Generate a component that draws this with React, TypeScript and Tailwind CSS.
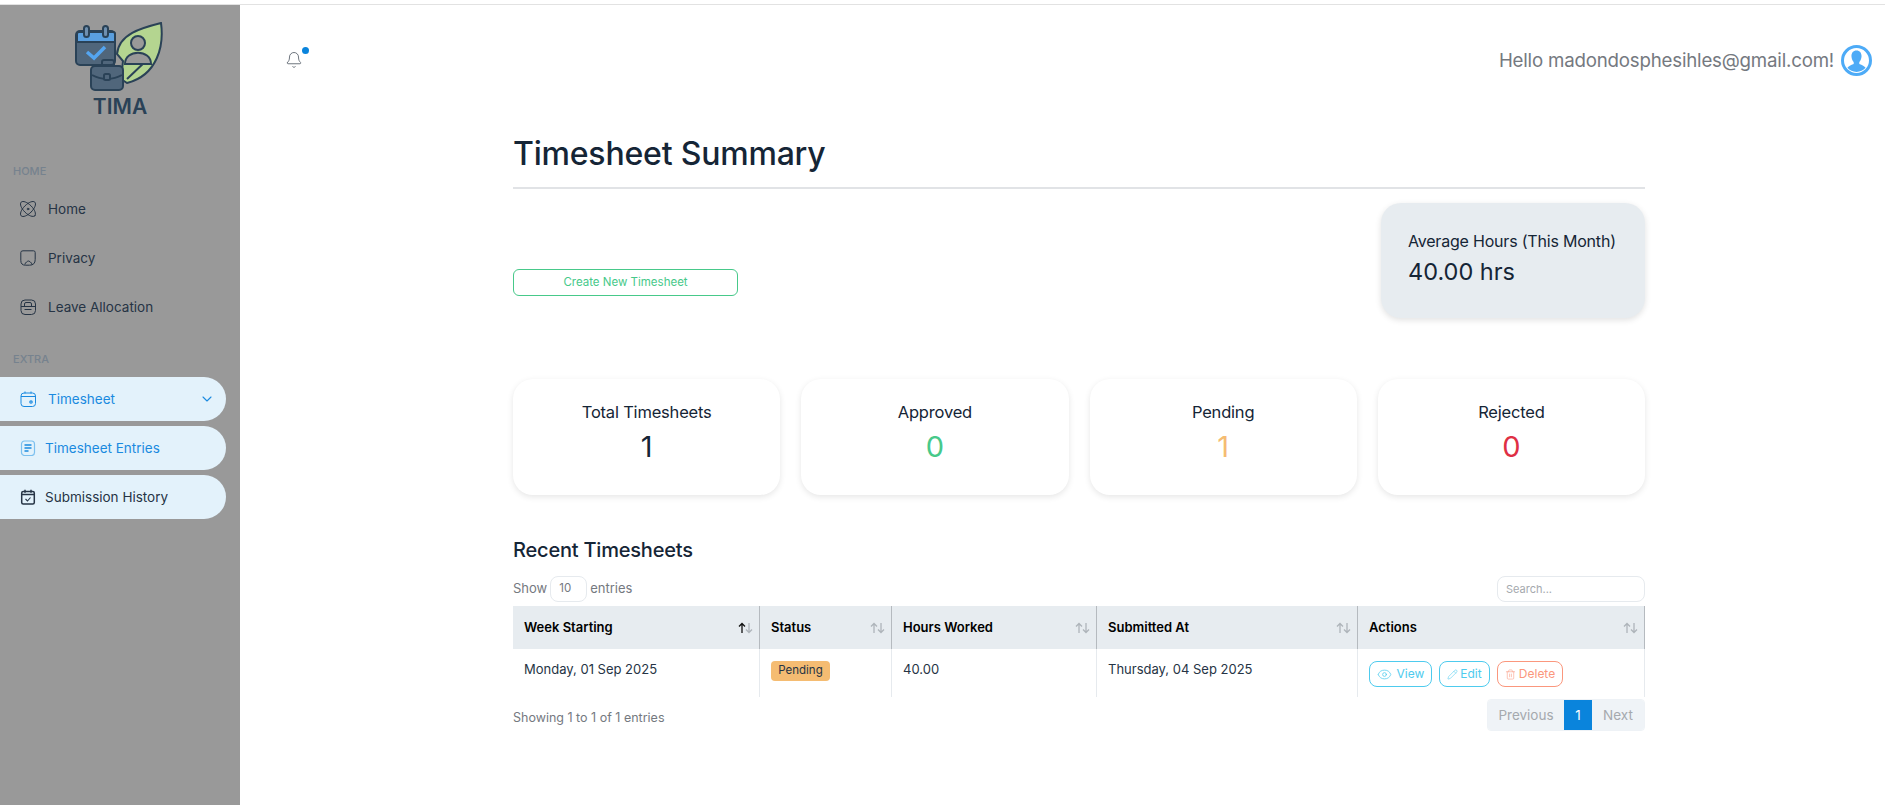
import { Atom, Bell, ChevronDown, Eye, Pencil, Trash2 } from "lucide-react";

const font = "[font-family:Inter,'Liberation_Sans',sans-serif]";

function Logo() {
  return (
    <svg width="90" height="72" viewBox="0 0 90 72" fill="none" stroke="#2a4257" strokeWidth="2" aria-hidden>
      <path d="M42 32C44 12 66 6 86 1c3 22-3 52-34 60l-6-4 2-18z" fill="#b4d590" />
      <path d="M52 57l20-19" />
      <circle cx="63" cy="21" r="7" fill="#999" />
      <path d="M50 42c0-15 26-15 26 0z" fill="#999" />
      <rect x="1" y="9" width="39" height="34" rx="4" fill="#50667b" />
      <path d="M2 20V12q0-2 2-2h34q2 0 2 2v8z" fill="#5a9fdf" />
      <rect x="9" y="4" width="5" height="11" rx="2.5" fill="#6f90b0" />
      <rect x="28" y="4" width="5" height="11" rx="2.5" fill="#6f90b0" />
      <path d="M12 30l7 6 11-11" stroke="#54a5f0" strokeWidth="3.5" />
      <path d="M27 44v-4q0-2 2-2h8q2 0 2 2v4" />
      <rect x="16" y="44" width="32" height="24" rx="4" fill="#50667b" />
      <path d="M17 53c9 5 21 5 30 0" />
      <rect x="29" y="52" width="6" height="6" rx="1.5" fill="#50667b" />
    </svg>
  );
}

function PrivacyIcon() {
  return (
    <svg width="16" height="16" viewBox="0 0 16 16" fill="none" stroke="#263445" strokeWidth="1" aria-hidden>
      <path d="M3 .8h10.5q1.7 0 1.7 1.7v7q0 5.7-5.7 5.7h-4q-4.7 0-4.7-4.7v-8q0-1.7 2.2-1.7z" />
      <path d="M5 14.5q0-1.500 1.500-2.500l1.200-.8q.7-.4 1.400 0l1.300.8q1.500 1 1.500 2.500" />
    </svg>
  );
}

function LeaveIcon() {
  return (
    <svg width="16" height="16" viewBox="0 0 16 16" fill="none" stroke="#263445" strokeWidth="1" aria-hidden>
      <rect x="1" y="1" width="14.500" height="14.500" rx="4" />
      <path d="M4.500 7V5q0-1.500 1.500-1.500h4q1.500 0 1.500 1.500v2M1 7.500h14.500M4.500 10.500h7" />
    </svg>
  );
}

function TimesheetIcon() {
  return (
    <svg width="16" height="16" viewBox="0 0 16 16" fill="none" stroke="#1a8ae0" strokeWidth="1" aria-hidden>
      <rect x="1" y="2" width="14.500" height="13.500" rx="3" />
      <path d="M1 5.500h14.500M5 .5v2M11 .5v2" />
      <circle cx="11" cy="11" r="1.200" strokeWidth="1.200" />
    </svg>
  );
}

function EntriesIcon() {
  return (
    <svg width="16" height="16" viewBox="0 0 16 16" fill="none" aria-hidden>
      <rect x="1.500" y="1" width="13" height="14.500" rx="3" stroke="#7cc0ef" strokeWidth="1.200" />
      <path d="M4.500 5h7M4.500 8h7M4.500 11h4" stroke="#1a8ae0" strokeWidth="1.300" />
    </svg>
  );
}

function HistoryIcon() {
  return (
    <svg width="16" height="16" viewBox="0 0 16 16" fill="none" stroke="#263445" strokeWidth="1.500" aria-hidden>
      <rect x="1.700" y="2.500" width="12.600" height="12.500" rx="1.500" />
      <path d="M2 5.500h12M5 .7v3M11 .7v3" />
      <path d="M5.500 10l2 2 3-3.500" strokeWidth="1.100" />
    </svg>
  );
}

function UserAvatar() {
  return (
    <svg width="31" height="31" viewBox="0 0 31 31" aria-hidden>
      <circle cx="15.500" cy="15.500" r="14" fill="#fff" stroke="#4dabf7" strokeWidth="3" />
      <path
        d="M15.500 5.500c3.600 0 5.300 2.900 5 6.300-.2 2.200-1 4-2.200 5.100v2.100c2.800 1.100 5.400 2.200 6.300 3.700a11.800 11.800 0 0 1-18.200 0c.9-1.500 3.500-2.600 6.300-3.700v-2.100c-1.200-1.100-2-2.900-2.200-5.100-.3-3.400 1.400-6.300 5-6.300z"
        fill="#4dabf7"
      />
    </svg>
  );
}

function SortArrows({ active = false }: { active?: boolean }) {
  return (
    <svg width="16" height="12" viewBox="0 0 16 12" fill="none" strokeWidth="1.300" aria-hidden>
      <path d="M4 11V1.500M1 4.500l3-3 3 3" stroke={active ? "#111" : "#aeb4ba"} />
      <path d="M11 1v9.500M8 7.500l3 3 3-3" stroke="#aeb4ba" />
    </svg>
  );
}

const stats = [
  { label: "Total Timesheets", value: "1", color: "text-[#152536]" },
  { label: "Approved", value: "0", color: "text-[#47c98a]" },
  { label: "Pending", value: "1", color: "text-[#f5bc72]" },
  { label: "Rejected", value: "0", color: "text-[#df2f44]" },
];

const columns = [
  { label: "Week Starting", width: "w-[247px]", active: true },
  { label: "Status", width: "w-[132px]" },
  { label: "Hours Worked", width: "w-[205px]" },
  { label: "Submitted At", width: "w-[261px]" },
  { label: "Actions", width: "w-[287px]" },
];

export default function App() {
  return (
    <div className={`${font} h-[805px] w-[1885px] overflow-hidden bg-white`}>
      <div className="h-[5px] border-b border-[#e2e2e2]" />
      <div className="flex h-[800px]">
        <aside className="w-[240px] shrink-0 bg-[#999999]">
          <div className="flex flex-col items-center pt-[17px]">
            <Logo />
            <div className="text-[21px] leading-[26px] font-semibold text-[#2a4257]">TIMA</div>
          </div>
          <div className="mt-[43px] pl-[13px] text-[11px] leading-4 font-medium text-[#76828e]">HOME</div>
          <nav className="mt-[14px] flex flex-col gap-[17px] pl-[20px] text-[13.500px] text-[#263445]">
            <a className="flex h-8 items-center gap-[10px]">
              <Atom className="-ml-[2px] h-[20px] w-[20px]" strokeWidth={1.200} />
              <span>Home</span>
            </a>
            <a className="flex h-8 items-center gap-[12px]">
              <PrivacyIcon />
              <span>Privacy</span>
            </a>
            <a className="flex h-8 items-center gap-[12px]">
              <LeaveIcon />
              <span>Leave Allocation</span>
            </a>
          </nav>
          <div className="mt-[28px] pl-[13px] text-[11px] leading-4 font-medium text-[#76828e]">EXTRA</div>
          <div className="mt-[10px] flex w-[226px] flex-col gap-[5px] text-[13.500px]">
            <a className="flex h-[44px] items-center rounded-r-[22px] bg-[#e3f2fb] pr-[11px] pl-[20px] text-[#1a8ae0]">
              <TimesheetIcon />
              <span className="ml-[12px] flex-1">Timesheet</span>
              <ChevronDown className="h-[16px] w-[16px]" strokeWidth={1.600} />
            </a>
            <a className="flex h-[44px] items-center rounded-r-[22px] bg-[#e3f2fb] pl-[20px] text-[#1a8ae0]">
              <EntriesIcon />
              <span className="ml-[9px]">Timesheet Entries</span>
            </a>
            <a className="flex h-[44px] items-center rounded-r-[22px] bg-[#e3f2fb] pl-[20px] text-[#263445]">
              <HistoryIcon />
              <span className="ml-[9px]">Submission History</span>
            </a>
          </div>
        </aside>

        <main className="flex-1">
          <header className="flex h-[72px] items-start justify-between pr-[13px] pl-[45px]">
            <div className="relative mt-[46px] text-[#5f6670]">
              <Bell className="h-[18px] w-[18px]" strokeWidth={1.200} />
              <span className="absolute -top-[4px] left-[17px] h-[7px] w-[7px] rounded-full bg-[#0a84dc]" />
            </div>
            <div className="mt-[40px] flex items-center gap-[7px]">
              <span className="text-[18.700px] leading-6 tracking-[-0.2px] text-[#75797f]">
                Hello madondosphesihles@gmail.com!
              </span>
              <UserAvatar />
            </div>
          </header>

          <div className="mr-[240px] ml-[273px]">
            <h1 className="mt-[57px] border-b-2 border-[#e1e3e6] pb-[13px] text-[32px] leading-[40px] font-medium tracking-[-0.2px] text-[#152536]">
              Timesheet Summary
            </h1>

            <div className="mt-[14px] flex items-start justify-between">
              <a className="mt-[66px] flex h-[27px] w-[225px] items-center justify-center rounded-[6px] border border-[#47c98a] text-[11.500px] text-[#47c98a]">
                Create New Timesheet
              </a>
              <div className="h-[115px] w-[264px] rounded-[20px] bg-[#e7ecf0] pt-[26px] pl-[27px] shadow-[0_2px_6px_rgba(0,0,0,0.12)]">
                <div className="text-[16px] leading-[24px] tracking-[-0.2px] text-[#152536]">Average Hours (This Month)</div>
                <div className="mt-[3px] text-[23.500px] leading-[32px] font-normal text-[#152536]">40.00 hrs</div>
              </div>
            </div>

            <div className="mt-[61px] grid grid-cols-4 gap-[21px]">
              {stats.map((s) => (
                <div
                  key={s.label}
                  className="flex h-[116px] flex-col items-center rounded-[20px] bg-white pt-[21px] shadow-[0_2px_6px_rgba(0,0,0,0.1)]"
                >
                  <div className="text-[16.500px] leading-6 tracking-[-0.2px] text-[#152536]">{s.label}</div>
                  <div className={`mt-[5px] text-[29px] leading-9 font-normal ${s.color}`}>{s.value}</div>
                </div>
              ))}
            </div>

            <h2 className="mt-[41px] text-[20px] leading-[28px] font-medium tracking-[-0.2px] text-[#152536]">
              Recent Timesheets
            </h2>

            <div className="mt-[12px] flex h-[26px] items-center justify-between">
              <div className="flex items-center text-[13px] text-[#75797f]">
                <span>Show</span>
                <span className="mx-[3px] flex h-[26px] w-[37px] items-center rounded-[8px] border border-[#e6eaee] pl-[8px] text-[11.500px]">
                  10
                </span>
                <span>entries</span>
              </div>
              <div className="flex h-[26px] w-[148px] items-center rounded-[8px] border border-[#e6eaee] pl-[8px] text-[11px] text-[#a5a9ae]">
                Search...
              </div>
            </div>

            <div className="mt-[4px]">
              <div className="flex h-[43px] bg-[#e7ecf0] text-[13px] font-semibold text-black">
                {columns.map((c) => (
                  <div key={c.label} className={`${c.width} flex items-center justify-between border-r border-[#b5babf] pr-[5px] pl-[11px]`}>
                    <span>{c.label}</span>
                    <SortArrows active={c.active} />
                  </div>
                ))}
              </div>
              <div className="flex h-[48px] text-[13px] text-[#263445]">
                <div className="w-[247px] border-r border-[#e6eaee] pt-[11px] pl-[11px]">Monday, 01 Sep 2025</div>
                <div className="w-[132px] border-r border-[#e6eaee] pt-[12px] pl-[11px]">
                  <span className="flex h-[20px] w-[59px] items-center justify-center rounded-[4px] bg-[#f5bc72] text-[11.500px]">Pending</span>
                </div>
                <div className="w-[205px] border-r border-[#e6eaee] pt-[11px] pl-[11px]">40.00</div>
                <div className="w-[261px] border-r border-[#e6eaee] pt-[11px] pl-[11px]">Thursday, 04 Sep 2025</div>
                <div className="flex w-[287px] items-start gap-[7px] border-r border-[#e6eaee] pt-[12px] pl-[11px] text-[12px]">
                  <span className="flex h-[26px] w-[63px] items-center justify-center gap-[5px] rounded-[8px] border border-[#4ecbee] text-[#4ecbee]">
                    <Eye className="h-[15px] w-[15px]" strokeWidth={1.200} />
                    View
                  </span>
                  <span className="flex h-[26px] w-[51px] items-center justify-center gap-[2px] rounded-[8px] border border-[#4ecbee] text-[#4ecbee]">
                    <Pencil className="h-[11px] w-[11px]" strokeWidth={1.200} />
                    Edit
                  </span>
                  <span className="flex h-[26px] w-[66px] items-center justify-center gap-[3px] rounded-[8px] border border-[#fb977d] text-[#fb977d]">
                    <Trash2 className="h-[11px] w-[11px]" strokeWidth={1.200} />
                    Delete
                  </span>
                </div>
              </div>
            </div>

            <div className="mt-[2px] flex items-start justify-between">
              <div className="mt-[9px] text-[12.500px] leading-[20px] text-[#75797f]">Showing 1 to 1 of 1 entries</div>
              <div className="flex h-[32px] overflow-hidden rounded-[4px] border border-[#eef2f6] text-[13.500px] text-[#a5a9ae]">
                <span className="flex w-[76px] items-center justify-center bg-[#eff3f7]">Previous</span>
                <span className="flex w-[28px] items-center justify-center bg-[#0a84dc] text-white">1</span>
                <span className="flex w-[52px] items-center justify-center bg-[#eff3f7]">Next</span>
              </div>
            </div>
          </div>
        </main>
      </div>
    </div>
  );
}
